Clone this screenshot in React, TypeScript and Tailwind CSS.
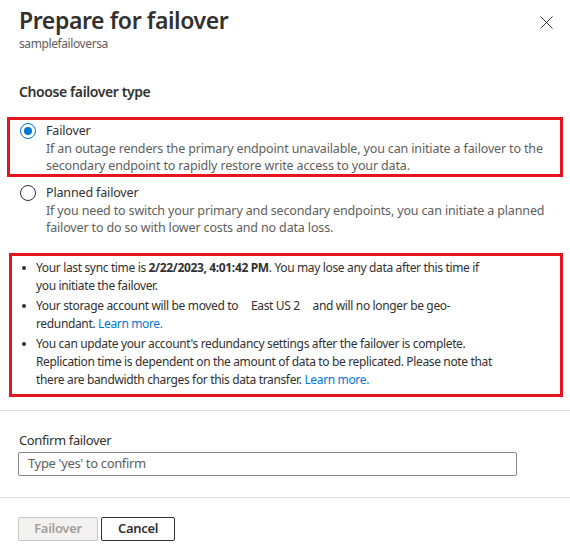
import React from "react";

const font = { fontFamily: '"Noto Sans", "Open Sans", sans-serif' };

function Bullet() {
  return (
    <span className="w-[24px] flex justify-center shrink-0">
      <span className="mt-[7px] w-[4px] h-[4px] rounded-full bg-[#323130]" />
    </span>
  );
}

export default function App() {
  return (
    <div
      className="w-[570px] h-[558px] bg-white text-[#323130] overflow-hidden font-['Noto_Sans',sans-serif]"
      style={font}
    >
      {/* Header */}
      <div className="flex justify-between pl-[19px] pr-[16px] pt-[4px]">
        <div>
          <div className="text-[23px] leading-[32px] font-semibold tracking-[-0.4px]">Prepare for failover</div>
          <div className="text-[12px] leading-[16px] text-[#605e5c] tracking-[-0.4px]">samplefailoversa</div>
        </div>
        <button className="mt-[10px] w-[16px] h-[16px] flex items-center justify-center text-[#3b3a39]">
          <svg width="13" height="13" viewBox="0 0 13 13" fill="none" stroke="currentColor" strokeWidth="1">
            <path d="M0.5 0.5 L12.5 12.5 M12.5 0.5 L0.5 12.5" />
          </svg>
        </button>
      </div>

      <div className="pl-[19px] mt-[30px] text-[14px] leading-[20px] font-semibold tracking-[-0.4px]">
        Choose failover type
      </div>

      {/* Option 1 */}
      <div className="ml-[7px] mr-[7px] mt-[15px] border-[3px] border-[#e4151d] pt-[2px] pl-[10px] flex">
        <div className="w-[16px] h-[16px] mt-[1px] rounded-full border border-[#0078d4] flex items-center justify-center shrink-0">
          <div className="w-[8px] h-[8px] rounded-full bg-[#0078d4]" />
        </div>
        <div className="ml-[10px] text-[12.5px] tracking-[-0.15px]">
          <div className="leading-[18px] text-[#323130]">Failover</div>
          <div className="leading-[17px] text-[#605e5c]">
            If an outage renders the primary endpoint unavailable, you can initiate a failover to the
            <br />
            secondary endpoint to rapidly restore write access to your data.
          </div>
        </div>
      </div>

      {/* Option 2 */}
      <div className="ml-[10px] mt-[7px] pl-[10px] flex">
        <div className="w-[16px] h-[16px] mt-[1px] rounded-full border border-[#323130] shrink-0" />
        <div className="ml-[10px] text-[12.5px] tracking-[-0.15px]">
          <div className="leading-[18px] text-[#323130]">Planned failover</div>
          <div className="leading-[17px] text-[#605e5c]">
            If you need to switch your primary and secondary endpoints, you can initiate a planned
            <br />
            failover to do so with lower costs and no data loss.
          </div>
        </div>
      </div>

      {/* Info box */}
      <div className="ml-[9px] mr-[7px] mt-[17px] border-[3px] border-[#e4151d] pt-[3px] pb-[5px]">
        <ul className="flex flex-col gap-[2px] text-[12px] leading-[18px] tracking-[-0.35px] text-[#323130]">
          <li className="flex">
            <Bullet />
            <span>
              Your last sync time is <b className="font-bold">2/22/2023, 4:01:42 PM</b>. You may lose any data after this time if
              <br />
              you initiate the failover.
            </span>
          </li>
          <li className="flex">
            <Bullet />
            <span>
              Your storage account will be moved to <span className="mx-[10px]">East US 2</span> and will no longer be geo-
              <br />
              redundant. <a className="text-[#0078d4]">Learn more.</a>
            </span>
          </li>
          <li className="flex">
            <Bullet />
            <span>
              You can update your account's redundancy settings after the failover is complete.
              <br />
              Replication time is dependent on the amount of data to be replicated. Please note that
              <br />
              there are bandwidth charges for this data transfer. <a className="text-[#0078d4]">Learn more.</a>
            </span>
          </li>
        </ul>
      </div>

      <div className="mt-[13px] h-px bg-[#e1dfdd]" />

      <div className="pl-[19px] mt-[19px] text-[13px] leading-[20px] tracking-[-0.38px]">Confirm failover</div>
      <div className="ml-[18px] mt-[2px] w-[499px] h-[24px] border border-[#8a8886] rounded-[2px] flex items-center pl-[9px] text-[13px] tracking-[-0.35px] text-[#605e5c]">
        Type 'yes' to confirm
      </div>

      <div className="mt-[21px] h-px bg-[#e1dfdd]" />

      <div className="pl-[18px] mt-[19px] flex gap-[3px]">
        <div className="w-[80px] h-[24px] border border-[#c8c6c4] bg-[#f3f2f1] rounded-[2px] flex items-center justify-center text-[13px] font-semibold tracking-[-0.3px] text-[#a19f9d]">
          Failover
        </div>
        <div className="w-[74px] h-[24px] border border-[#323130] bg-white rounded-[2px] flex items-center justify-center text-[13px] font-semibold tracking-[-0.3px] text-[#323130]">
          Cancel
        </div>
      </div>
    </div>
  );
}
